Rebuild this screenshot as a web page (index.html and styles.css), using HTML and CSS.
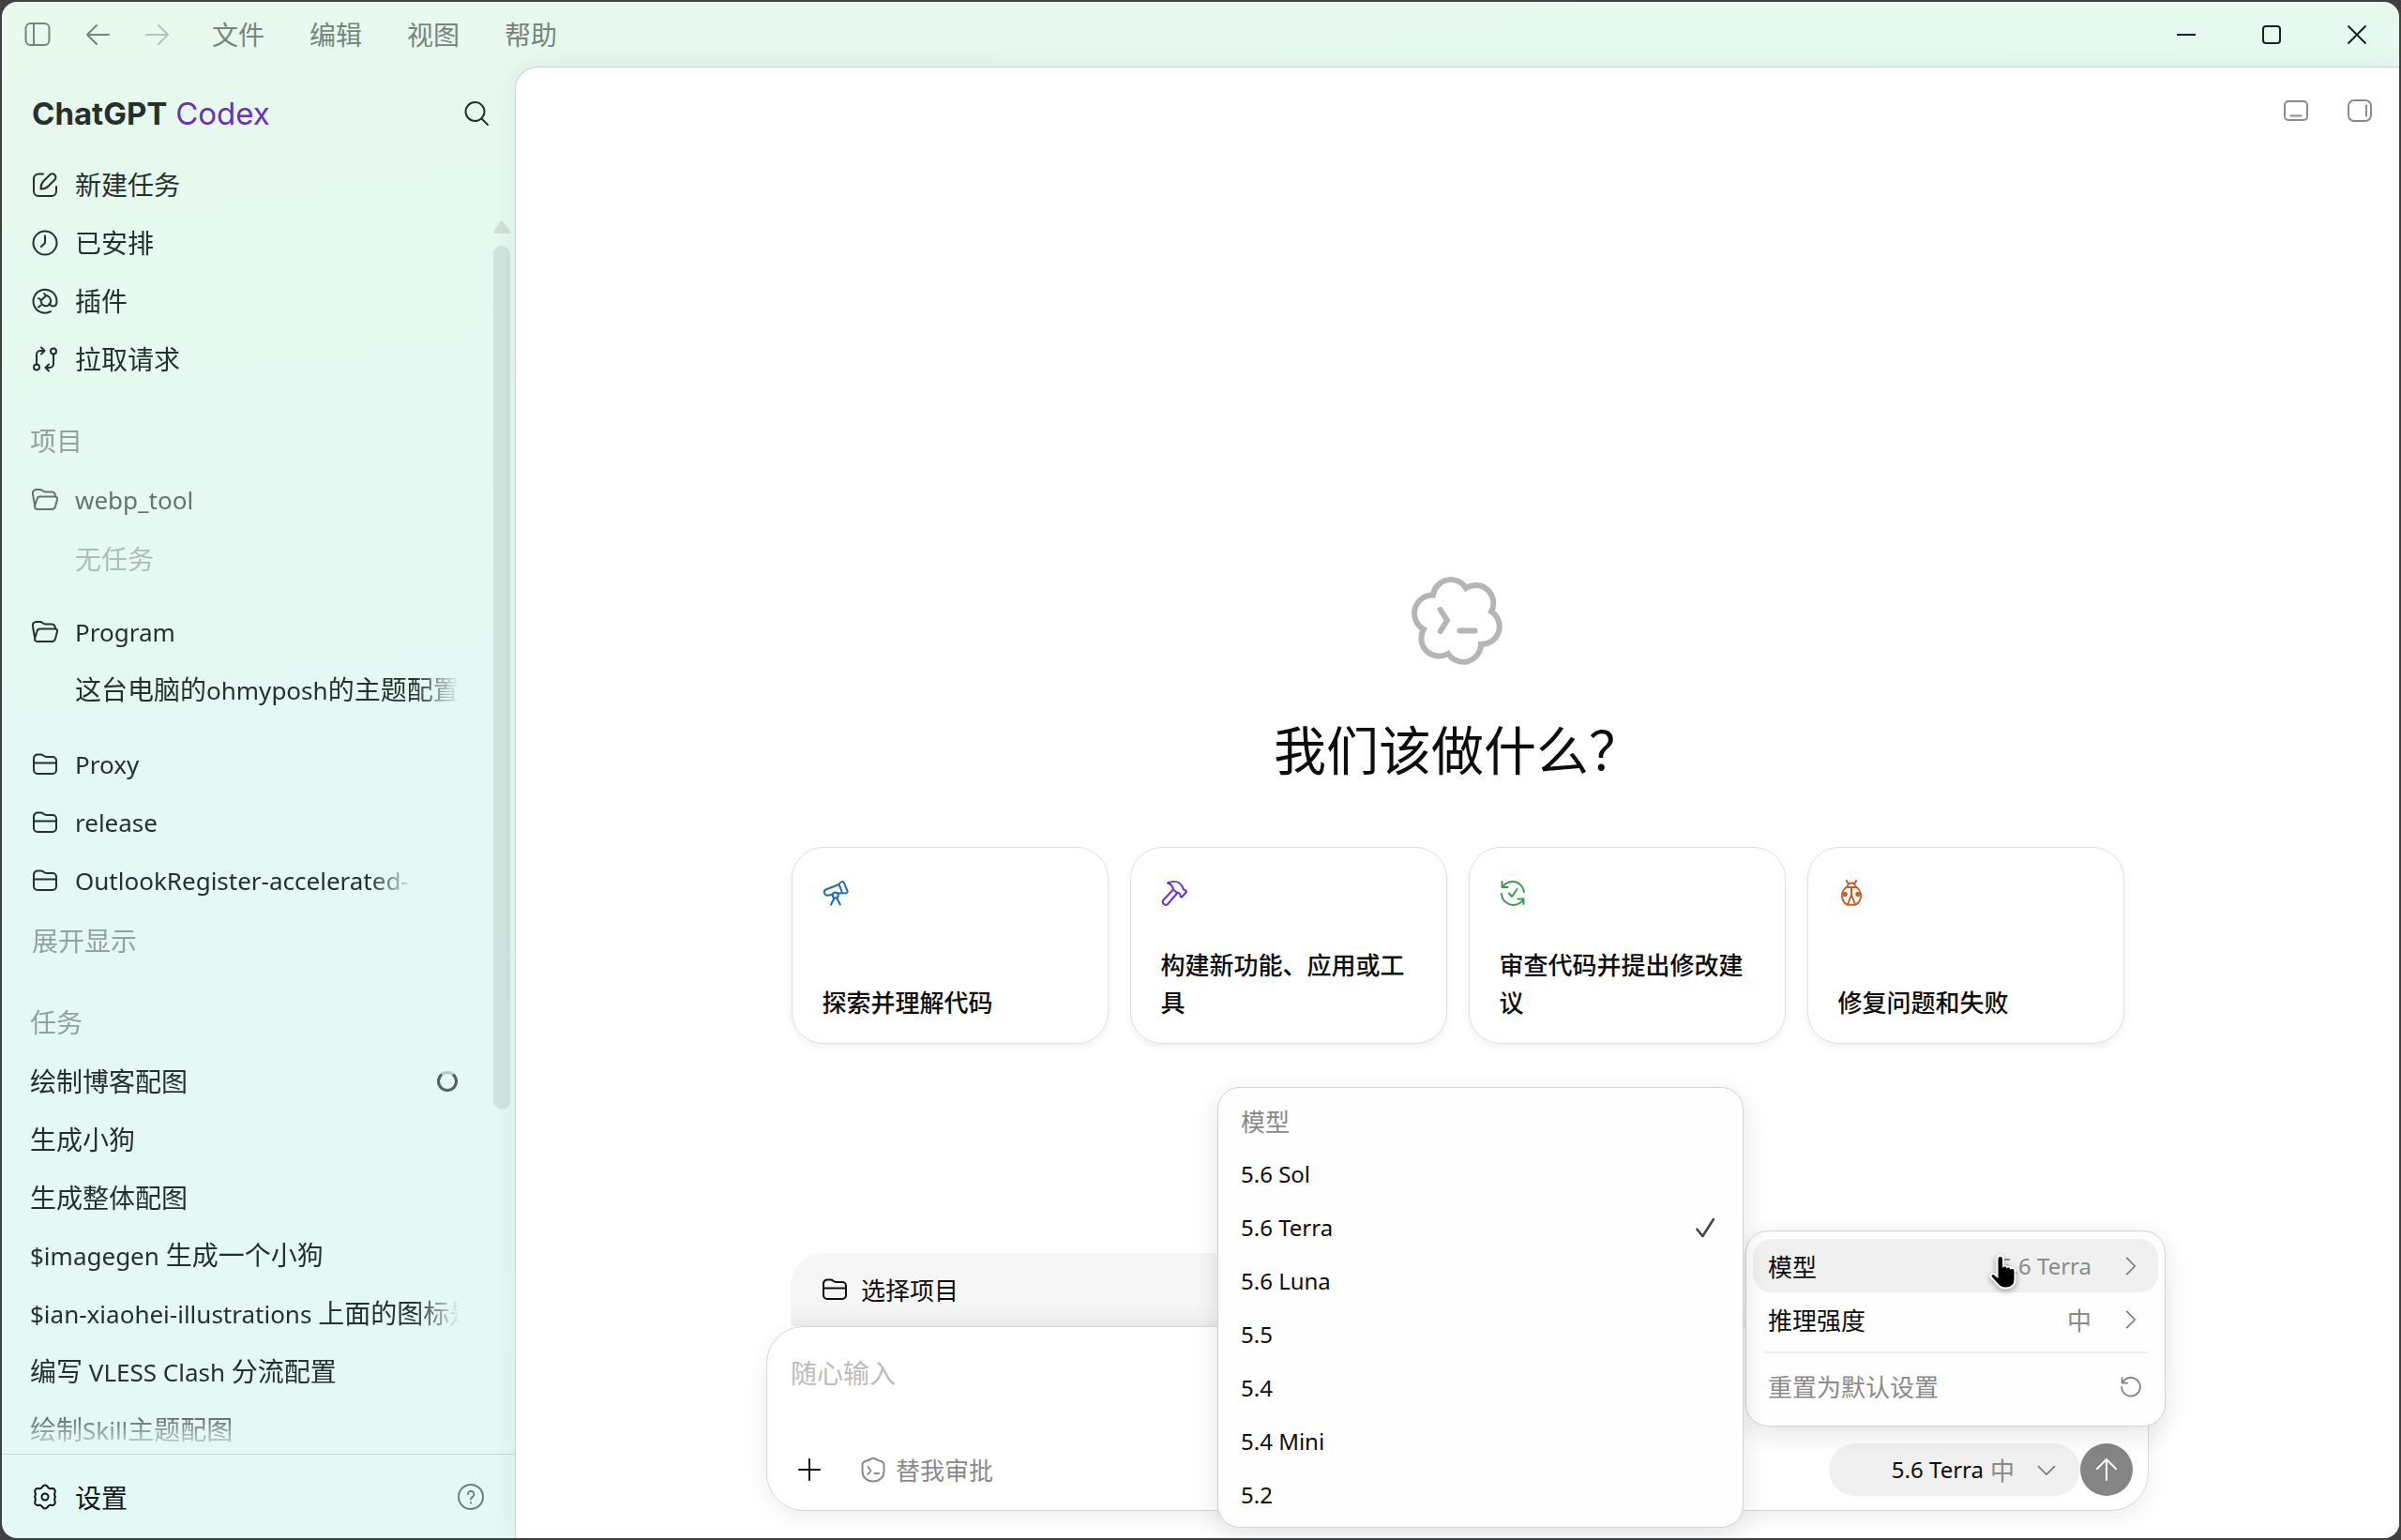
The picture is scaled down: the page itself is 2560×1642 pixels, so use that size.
FILE: index.html
```html
<!DOCTYPE html>
<html lang="zh-CN">
<head>
<meta charset="utf-8">
<meta name="viewport" content="width=device-width, initial-scale=1">
<title>ChatGPT Codex</title>
<link rel="stylesheet" href="styles.css">
</head>
<body>
<svg class="sprite" aria-hidden="true">
  <symbol id="folder" viewBox="0 0 28 28"><path d="M2 7.500a4 4 0 0 1 4-4h3.500c3 0 3 2.500 6 2.500H22a4 4 0 0 1 4 4V20a4 4 0 0 1-4 4H6a4 4 0 0 1-4-4ZM2 12.500h24"/></symbol>
  <symbol id="folder-open" viewBox="0 0 28 28"><path d="M3.500 22.500 1 8c-.5-3 1-5 4-5h3.500c3 0 3 2.500 6 2.500H21c3 0 4 2 4 5M8.500 10.500h16c2 0 3 1.500 2.500 3L25 21c-.6 2-1.800 3-3.500 3h-16c-2 0-2.800-1.500-2.300-3.500l2.300-7.500c.5-1.600 1.500-2.500 3-2.500Z"/></symbol>
  <symbol id="chevron" viewBox="0 0 28 28"><path d="m9 4 10 10L9 24"/></symbol>
</svg>

<div class="window">
  <header class="titlebar">
    <button class="tb-btn" aria-label="切换侧边栏"><svg class="icon" viewBox="0 0 28 28"><rect x="1.500" y="2" width="25" height="23" rx="5"/><path d="M10 2v23"/></svg></button>
    <button class="tb-btn" aria-label="后退"><svg class="icon" viewBox="0 0 28 28"><path d="M26 14H3M13 4 3 14l10 10"/></svg></button>
    <button class="tb-btn off" aria-label="前进"><svg class="icon" viewBox="0 0 28 28"><path d="M2 14h23M15 4l10 10-10 10"/></svg></button>
    <nav class="menubar">
      <button>文件</button><button>编辑</button><button>视图</button><button>帮助</button>
    </nav>
    <div class="win-controls">
      <button aria-label="最小化"><svg viewBox="0 0 20 20"><path d="M0 10h20"/></svg></button>
      <button aria-label="最大化"><svg viewBox="0 0 20 20"><rect x="1" y="1" width="18" height="18" rx="3"/></svg></button>
      <button aria-label="关闭"><svg viewBox="0 0 20 20"><path d="m.5.5 19 19M19.500.5l-19 19"/></svg></button>
    </div>
  </header>

  <aside class="sidebar">
    <div class="brand">
      <h2><b>ChatGPT</b> <span>Codex</span></h2>
      <button class="search" aria-label="搜索"><svg class="icon" viewBox="0 0 28 28"><circle cx="12.500" cy="12" r="10"/><path d="m19.500 19.500 6.500 6.500"/></svg></button>
    </div>
    <a class="row" href="#new"><svg class="icon" viewBox="0 0 28 28"><path d="M12 2.500H7a5 5 0 0 0-5 5V21a5 5 0 0 0 5 5h14a5 5 0 0 0 5-5v-5M9.500 18.500c0-4 .8-6 2.500-8l7-7a3.600 3.600 0 0 1 5.500 5l-7 7c-2 2-4 3-8 3Z"/></svg><span>新建任务</span></a>
    <div class="scroll">
      <div class="list">
        <a class="row" href="#scheduled"><svg class="icon" viewBox="0 0 28 28"><circle cx="14" cy="14" r="12.500"/><path d="M14 6.500V14l-4 4"/></svg><span>已安排</span></a>
        <a class="row" href="#plugins"><svg class="icon" viewBox="0 0 28 28"><path d="M20 25.200A12.500 12.500 0 1 1 26.500 14c0 3.500-1.200 5.500-3.600 5.500-2 0-3.200-1.200-4.400-2.500M9.500 13.500l6-5.500c3 1 5 4 4.500 7-.6 3.500-4 5-6.500 4-2.500-.9-3.700-3-4-5.500ZM9.500 18.500 7 20.500M10 13 7 11M15 8.500 13 6"/></svg><span>插件</span></a>
        <a class="row" href="#pulls"><svg class="icon" viewBox="0 0 28 28"><circle cx="5" cy="22.500" r="3"/><circle cx="23" cy="5.500" r="3"/><path d="M5 19.500V9a4 4 0 0 1 4-4h4M10 1.500 13.500 5 10 8.500M23 8.500V19a4 4 0 0 1-4 4h-4M18 19.500 14.500 23l3.500 3.500"/></svg><span>拉取请求</span></a>

        <h3>项目</h3>
        <a class="row muted" href="#webp"><svg class="icon"><use href="#folder-open"/></svg><span class="latin">webp_tool</span></a>
        <div class="row child faint">无任务</div>
        <a class="row group" href="#program"><svg class="icon"><use href="#folder-open"/></svg><span class="latin">Program</span></a>
        <a class="row child" href="#omp"><span class="fade">这台电脑的<span class="latin">ohmyposh</span>的主题配置</span></a>
        <a class="row group" href="#proxy"><svg class="icon"><use href="#folder"/></svg><span class="latin">Proxy</span></a>
        <a class="row" href="#release"><svg class="icon"><use href="#folder"/></svg><span class="latin">release</span></a>
        <a class="row narrow" href="#outlook"><svg class="icon"><use href="#folder"/></svg><span class="latin fade">OutlookRegister-accelerated-</span></a>
        <button class="more">展开显示</button>

        <h3>任务</h3>
        <a class="row task" href="#t1"><span>绘制博客配图</span><svg class="spinner" viewBox="0 0 22 22"><circle class="dim" cx="11" cy="11" r="9.500"/><path d="M5 3.600A9.500 9.500 0 1 0 17 3.600"/></svg></a>
        <a class="row task" href="#t2"><span>生成小狗</span></a>
        <a class="row task" href="#t3"><span>生成整体配图</span></a>
        <a class="row task" href="#t4"><span><span class="latin">$imagegen </span>生成一个小狗</span></a>
        <a class="row task" href="#t5"><span class="fade"><span class="latin">$ian-xiaohei-illustrations </span>上面的图标是</span></a>
        <a class="row task" href="#t6"><span>编写<span class="latin"> VLESS Clash </span>分流配置</span></a>
        <a class="row task" href="#t7"><span>绘制<span class="latin">Skill</span>主题配图</span></a>
      </div>
      <div class="scrollbar" aria-hidden="true">
        <svg viewBox="0 0 18 14"><path d="M7.500 1.500a2 2 0 0 1 3 0l7 9.500c1 1.500 0 3-1.500 3H2c-1.500 0-2.500-1.500-1.500-3Z"/></svg>
        <div class="thumb"></div>
      </div>
    </div>
    <footer class="settings">
      <a href="#settings"><svg class="icon" viewBox="0 0 28 28"><path d="M11.500 2.800c1.300-1.700 3.700-1.700 5 0l1 1.400c.6.800 1.600 1.200 2.500 1.100l1.700-.2c2-.2 3.500 1.600 3 3.500l-.5 2.200c-.2.900 0 1.800.5 2.500l.3.700-.3.700c-.5.700-.7 1.600-.5 2.500l.5 2.200c.5 1.900-1 3.700-3 3.500l-1.700-.2c-.9-.1-1.900.3-2.500 1.100l-1 1.400c-1.300 1.700-3.700 1.700-5 0l-1-1.400c-.6-.8-1.600-1.200-2.500-1.100l-1.700.2c-2 .2-3.500-1.600-3-3.500l.5-2.200c.2-.9 0-1.800-.5-2.500L3 14l.3-.7c.5-.7.7-1.600.5-2.500l-.5-2.200c-.5-1.900 1-3.700 3-3.500l1.700.2c.9.100 1.900-.3 2.500-1.100Z"/><circle cx="14" cy="14" r="3.500"/></svg><span>设置</span></a>
      <button class="help" aria-label="帮助"><svg class="icon" viewBox="0 0 28 28"><circle cx="14" cy="14" r="13"/><path d="M10.800 11a3.300 3.300 0 1 1 5.200 2.800c-1.200.8-2 1.400-2 2.700M14 20v.6"/></svg></button>
    </footer>
  </aside>

  <main class="panel">
    <div class="tools">
      <button aria-label="底部面板"><svg class="icon" viewBox="0 0 28 28"><rect x="2" y="3" width="24" height="20" rx="4"/><path d="M8.500 18.500h11"/></svg></button>
      <button aria-label="右侧面板"><svg class="icon" viewBox="0 0 28 28"><rect x="2" y="2" width="24" height="22" rx="6"/><path d="M21 7.500v11"/></svg></button>
    </div>

    <section class="hero">
      <svg class="mark" viewBox="0 0 94 94"><path d="M21 20.500A19 19 0 0 1 56 13 19 19 0 0 1 83 38 19 19 0 0 1 72 73 19 19 0 0 1 37 83 19 19 0 0 1 11 57 19.500 19.500 0 0 1 21 20.500ZM28.700 36 36 47.500 28.700 59M49.500 58.500h16"/></svg>
      <h1>我们该做什么？</h1>
      <div class="cards">
        <button class="card blue"><svg class="icon" viewBox="0 0 28 28"><path d="M17.500 4.500c2-2.500 4.500-3.500 5.500-1L26.500 12c.5 2-1 3-5.500 2ZM17.500 5 3.500 10.500c-1.500.6-2 2-1.500 3.500s2 3 3.500 2.700L11 15.500M16.500 14.800l4.500-.8M17.500 5 21 14"/><circle cx="13.800" cy="16.500" r="3"/><path d="M12.500 19.500 9 26.500M15.200 19.500l3.600 7"/></svg><span>探索并理解代码</span></button>
        <button class="card violet"><svg class="icon" viewBox="0 0 28 28"><path d="M7 3.500C14 .5 20 2 23 8c.6 2 .5 3.500 3.500 3.500L27 13l-5 5.500-1.500-.5c.3-3-1-4.500-4-4.500L13 10.500C12.500 7 11 5 7 3.500ZM12.500 11 2.500 21.500c-2.500 3 1.500 7 4.500 4.500L17 14.500"/></svg><span>构建新功能、应用或工具</span></button>
        <button class="card green"><svg class="icon" viewBox="0 0 28 28"><path d="M2.500 2v6h6M3 8C8 .5 18 0 23.500 7c1.500 2 2.300 4 2.500 6M2 15c.5 10 12 15 20 9.500 1.200-.9 2-1.700 3-3M25.500 26v-5.500h-6M10 14.500l3 3.500 5.500-8"/></svg><span>审查代码并提出修改建议</span></button>
        <button class="card orange"><svg class="icon" viewBox="0 0 28 28"><path d="M9 1c0 1.500.8 2.200 2 2.500M19 1c0 1.500-.8 2.200-2 2.500M9.500 8c0-6 9-6 9 0M14 8v8M8.500 8h11C24 11.500 25.500 17 23 22c-1 2-2.800 4-5 4.700h-8C7.800 26 6 24 5 22 2.500 17 4 11.500 8.500 8ZM14 16l-4 10.500M14 16l4 10.500"/><circle class="dot" cx="7" cy="15.500" r="2.800"/><circle class="dot" cx="21" cy="15.500" r="2.800"/></svg><span>修复问题和失败</span></button>
      </div>
    </section>

    <section class="dock">
      <div class="project-bar"><button><svg class="icon"><use href="#folder"/></svg><span>选择项目</span></button></div>
      <form class="composer">
        <textarea aria-label="随心输入" placeholder="随心输入" rows="1"></textarea>
        <div class="actions">
          <button type="button" class="plus" aria-label="添加"><svg class="icon" viewBox="0 0 28 28"><path d="M14 3v22M3 14h22"/></svg></button>
          <button type="button" class="approve"><svg class="icon" viewBox="0 0 28 28"><path d="M14 1.800c-1 0-4 2-7.500 3C4 5.500 2.500 6.500 2.500 9v7c0 6 5 10.500 11.500 10.500S25.500 22 25.500 16V9c0-2.500-1.500-3.500-4-4.200C18 3.800 15 1.800 14 1.800ZM8.500 11l3 4-3 4M15.500 18h4.500"/></svg><span>替我审批</span></button>
          <button type="button" class="model-pill"><span class="latin">5.6 Terra</span><span class="level">中</span><svg class="icon" viewBox="0 0 28 28"><path d="m4 10 10 10 10-10"/></svg></button>
          <button type="submit" class="send" aria-label="发送"><svg class="icon" viewBox="0 0 28 28"><path d="M14 25V3M4 13 14 3l10 10"/></svg></button>
        </div>
      </form>

      <div class="popover settings-menu" role="menu">
        <button class="item active" role="menuitem"><span>模型</span><span class="value latin">5.6 Terra</span><svg class="icon"><use href="#chevron"/></svg></button>
        <button class="item" role="menuitem"><span>推理强度</span><span class="value">中</span><svg class="icon"><use href="#chevron"/></svg></button>
        <hr>
        <button class="item reset" role="menuitem"><span>重置为默认设置</span><svg class="icon" viewBox="0 0 28 28"><path d="M3 3.500v6.500h6.500M3.800 9.500A11.500 11.500 0 1 1 2.500 15"/></svg></button>
        <svg class="cursor" viewBox="0 0 32 42"><path d="M9.500 5.500C9.500 3 11 2 12.500 2S16 3 16 5.500V13c1.500-1 3.500-.5 4 1 1.500-1 3.500-.3 4 1.200 2.500-.7 4.500.5 4.500 3.300V27c0 6-4 9.500-10 9.500-4 0-7-1.500-9-4.500L3 25c-1.500-2.500 1-5 3.500-3.500L9.500 24Z"/></svg>
      </div>

      <div class="popover model-menu" role="menu">
        <div class="caption">模型</div>
        <button class="item" role="menuitemradio">5.6 Sol</button>
        <button class="item" role="menuitemradio" aria-checked="true">5.6 Terra<svg class="icon" viewBox="0 0 28 28"><path d="m4 16 7 8.500L24.500 3.500"/></svg></button>
        <button class="item" role="menuitemradio">5.6 Luna</button>
        <button class="item" role="menuitemradio">5.5</button>
        <button class="item" role="menuitemradio">5.4</button>
        <button class="item" role="menuitemradio">5.4 Mini</button>
        <button class="item" role="menuitemradio">5.2</button>
      </div>
    </section>
  </main>
</div>
</body>
</html>
```
FILE: styles.css
```css
* { box-sizing: border-box; }

html, body { height: 100%; }

body {
  margin: 0;
  padding: 2px;
  overflow: hidden;
  background: #3f4043;
  color: #26302c;
  font: 28px/40px "Noto Sans CJK SC", sans-serif;
}

button, textarea {
  padding: 0;
  border: 0;
  background: none;
  color: inherit;
  font: inherit;
}

a { color: inherit; text-decoration: none; }
h1, h2, h3 { margin: 0; font-weight: 400; }

.sprite { position: absolute; width: 0; height: 0; }

.icon {
  display: block;
  flex: none;
  width: 28px;
  height: 28px;
  fill: none;
  stroke: currentColor;
  stroke-width: 2;
  stroke-linecap: round;
  stroke-linejoin: round;
}

.latin { font-family: "Noto Sans", "Noto Sans CJK SC", sans-serif; font-size: 26px; white-space: pre; }

.window {
  display: grid;
  grid-template-columns: 547px minmax(0, 1fr);
  grid-template-rows: 69px minmax(0, 1fr);
  height: 100%;
  overflow: hidden;
  border-radius: 16px;
  background: linear-gradient(172deg, #e8f9ed 0%, #e6f9f2 22%, #e4f9f5 50%, #e4f8f7 100%);
}

/* title bar */
.titlebar {
  grid-column: 1 / -1;
  display: flex;
  align-items: center;
  gap: 36px;
  padding-left: 24px;
  color: #77857d;
}
.tb-btn.off { opacity: .45; }
.menubar { display: flex; gap: 48px; margin-left: 8px; padding-bottom: 2px; }
.win-controls { display: flex; align-self: stretch; margin-left: auto; color: #1b211d; }
.win-controls button { display: grid; place-items: center; width: 91px; }
.win-controls svg { width: 20px; height: 20px; fill: none; stroke: currentColor; stroke-width: 2; overflow: visible; }

/* sidebar */
.sidebar { display: flex; flex-direction: column; min-height: 0; }
.brand {
  display: flex;
  align-items: center;
  justify-content: space-between;
  height: 95px;
  padding: 4px 27px 0 32px;
}
.brand h2 { font: 500 33px/40px Inter, sans-serif; }
.brand b { font-weight: 700; }
.brand span { color: #6a32b4; font-weight: 400; }
.row {
  display: flex;
  align-items: center;
  flex: none;
  gap: 18px;
  height: 62px;
  padding: 0 60px 0 32px;
  white-space: nowrap;
}
.row > span:not(.latin) { padding-bottom: 2px; }
.scroll { display: flex; flex: 1; min-height: 0; }
.list {
  flex: 1;
  min-width: 0;
  overflow: hidden;
  -webkit-mask-image: linear-gradient(#000 calc(100% - 56px), transparent);
  mask-image: linear-gradient(#000 calc(100% - 56px), transparent);
}
.list .row { padding-right: 36px; }
.list .narrow { padding-right: 84px; }
.list .child { padding-left: 78px; }
.list .task { padding-left: 30px; justify-content: space-between; }
.list .group { margin-top: 17px; }
.muted { color: #66736e; }
.faint { color: #adbeb8; }
.fade {
  flex: 1;
  min-width: 0;
  overflow: hidden;
  -webkit-mask-image: linear-gradient(to right, #000 calc(100% - 48px), transparent);
  mask-image: linear-gradient(to right, #000 calc(100% - 48px), transparent);
}
.sidebar h3 { height: 64px; margin-top: 24px; padding-left: 30px; color: #93a29c; font-size: 28px; line-height: 62px; }
.more { display: block; height: 64px; padding-left: 32px; color: #93a29c; }
.spinner { width: 22px; height: 22px; margin-right: 2px; fill: none; stroke: #55625d; stroke-width: 3; }
.spinner .dim { stroke: #b9c9c3; }
.scrollbar { display: flex; flex-direction: column; gap: 13px; width: 23px; padding-top: 7px; }
.scrollbar svg { width: 18px; height: 14px; fill: #d0e1da; }
.thumb { width: 18px; height: 70%; border-radius: 9px; background: #d1e4df; }
.settings {
  display: flex;
  align-items: center;
  justify-content: space-between;
  height: 90px;
  padding: 0 33px 0 32px;
  border-top: 1px solid #c5dad7;
  color: #101513;
}
.settings a { display: flex; align-items: center; gap: 18px; }
.help { color: #72807c; }

/* main panel */
.panel {
  display: flex;
  flex-direction: column;
  border: solid #c8d8d0;
  border-width: 1px 0 0 1px;
  border-radius: 24px 0 0 0;
  background: #fff;
  box-shadow: 0 0 24px rgba(0, 40, 20, .07);
  color: #0d0d0d;
}
.tools { display: flex; justify-content: flex-end; gap: 40px; height: 94px; padding: 33px 28px 0 0; color: #8b8b8b; }
.tools button { height: 28px; }
.hero {
  display: flex;
  flex: 1;
  flex-direction: column;
  align-items: center;
  justify-content: center;
  padding: 225px 48px 0;
}
.mark { width: 94px; height: 94px; fill: none; stroke: #b5b5b5; stroke-width: 6; stroke-linecap: round; overflow: visible; }
.hero h1 { margin: 49px 0 66px; font-size: 56px; line-height: 80px; }
.cards { display: grid; grid-template-columns: repeat(4, minmax(0, 1fr)); gap: 23px; width: 100%; max-width: 1421px; }
.card {
  display: flex;
  flex-direction: column;
  align-items: flex-start;
  justify-content: space-between;
  height: 210px;
  padding: 34px 32px 24px;
  border: 1px solid #e0e0e0;
  border-radius: 34px;
  background: #fff;
  box-shadow: 0 4px 8px rgba(0, 0, 0, .06);
  font-size: 26px;
  font-weight: 500;
  text-align: left;
}
.card .icon { stroke-width: 2; }
.blue .icon { color: #1d6cb4; }
.violet .icon { color: #6c35b8; }
.green .icon { color: #3f9a55; }
.orange .icon { color: #c9602c; }
.dot { fill: currentColor; stroke: none; }

/* composer */
.dock { position: relative; width: calc(100% - 96px); max-width: 1474px; margin: 0 auto 29px; }
.project-bar {
  height: 78px;
  margin: 0 26px;
  padding: 19px 33px;
  border-radius: 36px 36px 0 0;
  background: linear-gradient(#f6f6f6 70%, #efefef);
  font-size: 26px;
}
.project-bar button { display: flex; align-items: center; gap: 14px; }
.composer {
  display: flex;
  flex-direction: column;
  height: 197px;
  border: 1px solid #d8d8d8;
  border-radius: 40px;
  background: #fff;
  box-shadow: 0 6px 24px rgba(0, 0, 0, .07);
}
.composer textarea { flex: 1; padding: 28px 25px 0; outline: 0; resize: none; }
.composer textarea::placeholder { color: #bcbcbc; opacity: 1; }
.actions { display: flex; align-items: center; height: 56px; margin: 0 16px 15px 31px; font-size: 26px; }
.approve { display: flex; align-items: center; gap: 10px; margin-left: 40px; color: #8a8a8a; }
.model-pill {
  display: flex;
  align-items: center;
  justify-content: flex-end;
  width: 268px;
  height: 56px;
  margin-left: auto;
  padding-right: 24px;
  border-radius: 28px;
  background: #f0f0f0;
}
.level { margin: 0 22px 0 7px; color: #8a8a8a; }
.model-pill .icon { color: #7d7d7d; }
.model-pill .latin, .popover .latin { font-size: 24px; }
.model-pill .icon, .popover .icon { width: 24px; height: 24px; }
.send { display: grid; place-items: center; width: 56px; height: 56px; border-radius: 50%; background: #858585; color: #fff; }

/* popovers */
.popover {
  position: absolute;
  border: 1px solid #d3d3d3;
  border-radius: 24px;
  background: #fdfefd;
  box-shadow: 0 8px 28px rgba(0, 0, 0, .11);
  font-size: 26px;
}
.popover .item { display: flex; align-items: center; width: 100%; height: 57px; }
.settings-menu { right: -18px; bottom: 90px; width: 448px; padding: 8px 7px 14px; }
.settings-menu .item { padding: 0 17px 0 16px; border-radius: 20px; }
.settings-menu .active { background: #f0f0f0; }
.settings-menu .value { margin: 0 30px 0 auto; color: #8a8a8a; }
.settings-menu .icon { color: #7d7d7d; }
.settings-menu hr { height: 2px; margin: 6px 12px; border: 0; background: #ededed; }
.settings-menu .reset { justify-content: space-between; color: #8a8a8a; }
.cursor { position: absolute; top: 24px; left: 258px; width: 32px; height: 42px; fill: #000; stroke: #fff; stroke-width: 2; filter: drop-shadow(0 2px 3px rgba(0, 0, 0, .35)); }
.model-menu { right: 432px; bottom: -18px; width: 561px; padding: 7px 8px 6px; }
.model-menu .item { justify-content: space-between; padding: 0 20px 0 16px; font-family: "Noto Sans", sans-serif; font-size: 24px; }
.model-menu .icon { color: #444; stroke-width: 3; }
.caption { height: 56px; padding-left: 16px; color: #8a8a8a; line-height: 56px; }
```
